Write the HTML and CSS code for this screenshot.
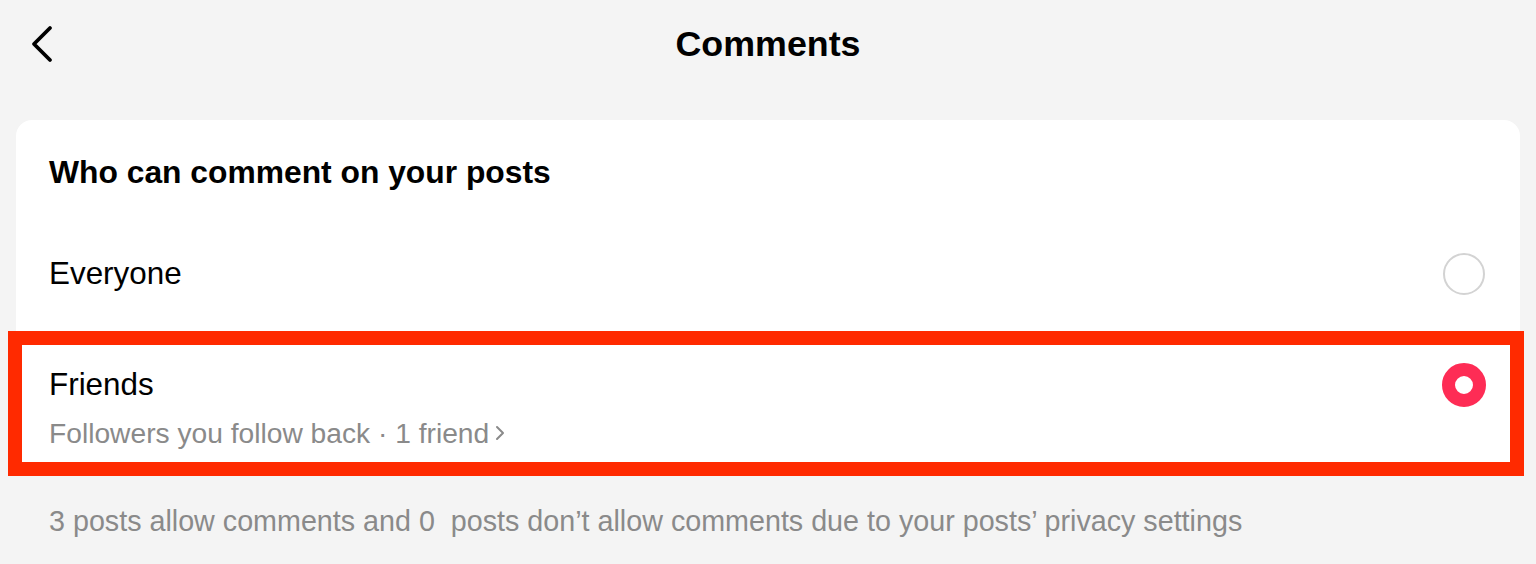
FILE: index.html
```html
<!DOCTYPE html>
<html lang="en">
<head>
  <meta charset="UTF-8">
  <title>Comments</title>
  <link rel="stylesheet" href="styles.css">
</head>
<body>
  <div class="topbar">
    <button class="back-btn" aria-label="Back">
      <svg width="24" height="40" viewBox="0 0 24 40"><path d="M19 4 L3 20 L19 36" fill="none" stroke="#000" stroke-width="3.8" stroke-linecap="round" stroke-linejoin="round"/></svg>
    </button>
    <h1>Comments</h1>
  </div>
  <div class="card">
    <div class="card-title">Who can comment on your posts</div>
    <div class="option">
      <div class="option-text">
        <div class="option-label">Everyone</div>
      </div>
      <span class="radio"></span>
    </div>
    <div class="option highlighted">
      <div class="option-text">
        <div class="option-label">Friends</div>
        <div class="option-sub">Followers you follow back · 1 friend
          <svg class="sub-arrow" width="10" height="16" viewBox="0 0 10 16"><path d="M2 2 L8 8 L2 14" fill="none" stroke="#8a8a8a" stroke-width="2" stroke-linecap="round" stroke-linejoin="round"/></svg>
        </div>
      </div>
      <span class="radio checked"></span>
    </div>
  </div>
  <p class="footnote">3 posts allow comments and 0 &nbsp;posts don’t allow comments due to your posts’ privacy settings</p>
</body>
</html>
```

FILE: styles.css
```css
body { margin: 0; padding: 0; background: #f4f4f4; font-family: "Liberation Sans", Arial, sans-serif; color: #000; }
.topbar { position: relative; height: 88px; display: flex; align-items: center; justify-content: center; }
.topbar h1 { margin: 0; font-size: 35.8px; font-weight: bold; line-height: 88px; }
.back-btn { position: absolute; left: 31px; top: 24px; padding: 0; border: none; background: none; cursor: pointer; }
.back-btn svg { display: block; }
.card { margin: 32px 16px 0; background: #fff; border-radius: 16px; }
.card-title { padding: 32px 33px 27px; font-size: 31.8px; font-weight: bold; line-height: 40px; }
.option { position: relative; display: flex; align-items: flex-start; justify-content: space-between; padding: 35px 35px 35px 33px; }
.option-label { font-size: 31.4px; line-height: 40px; }
.option-sub { margin-top: 12px; font-size: 28.2px; line-height: 32px; color: #8a8a8a; display: flex; align-items: center; gap: 6px; }
.highlighted { padding-bottom: 22px; }
.highlighted::after { content: ""; position: absolute; left: -8px; right: -4px; top: 1px; bottom: -5px; border: 14px solid #ff2a00; pointer-events: none; }
.radio { width: 42px; height: 42px; box-sizing: border-box; border-radius: 50%; border: 2px solid #d3d3d3; margin-top: -1px; flex-shrink: 0; }
.radio.checked { width: 44px; height: 44px; border: 13px solid #fe2c55; margin-top: -2px; margin-right: -1px; }
.footnote { margin: 34px 49px 0; font-size: 28.7px; line-height: 32px; color: #8a8a8a; }
```
